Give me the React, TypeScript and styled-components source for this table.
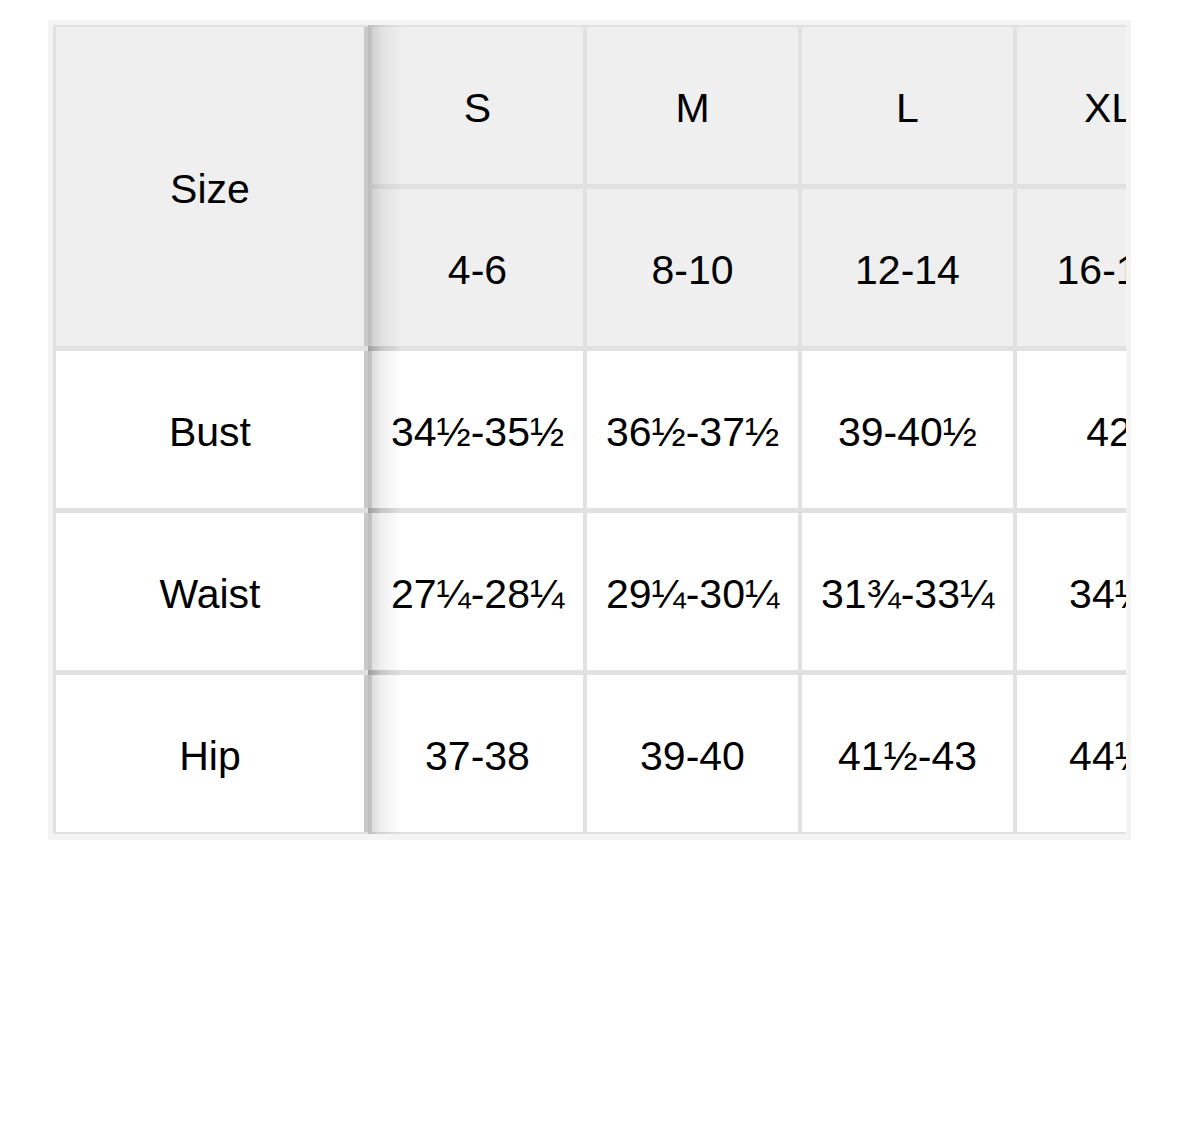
import React from "react";
import styled, { createGlobalStyle } from "styled-components";

const Global = createGlobalStyle`
  html, body { margin: 0; padding: 0; background: #ffffff; }
  body { font-family: "Liberation Sans", Arial, Helvetica, sans-serif; }
`;

const Frame = styled.div`
  margin: 20px 0 0 48px;
  width: 1083px;
  box-sizing: border-box;
  padding: 5px 5px 6px 5px;
  background: #f4f4f4;
`;

const Viewport = styled.div`
  width: 1073px;
  height: 809px;
  overflow: hidden;
  background: #e1e1e1;
`;

const Grid = styled.div`
  display: grid;
  grid-template-columns: 312px repeat(3, 211px) 184px;
  grid-template-rows: repeat(5, 157px);
  column-gap: 4px;
  row-gap: 5px;
  padding: 2px 0 2px 3px;
  width: max-content;
`;

const Cell = styled.div<{ $head?: boolean; $span?: number }>`
  display: flex;
  align-items: center;
  justify-content: center;
  box-sizing: border-box;
  padding-top: 5px;
  background: ${(p) => (p.$head ? "#efefef" : "#ffffff")};
  color: #000;
  font-size: 41px;
  line-height: 1;
  white-space: nowrap;
  ${(p) => (p.$span ? `grid-row: span ${p.$span};` : "")}
`;

const Sticky = styled(Cell)`
  position: relative;
  z-index: 1;
  border-right: 4px solid #c9c9c9;
  &::after {
    content: "";
    position: absolute;
    top: -5px;
    bottom: -5px;
    right: -38px;
    width: 34px;
    background: linear-gradient(
      to right,
      rgba(0, 0, 0, 0.16),
      rgba(0, 0, 0, 0.06) 40%,
      rgba(0, 0, 0, 0)
    );
    pointer-events: none;
  }
`;

const sizes = ["S", "M", "L", "XL"];
const numeric = ["4-6", "8-10", "12-14", "16-18"];
const rows: { label: string; values: string[] }[] = [
  { label: "Bust", values: ["34½-35½", "36½-37½", "39-40½", "42"] },
  { label: "Waist", values: ["27¼-28¼", "29¼-30¼", "31¾-33¼", "34½"] },
  { label: "Hip", values: ["37-38", "39-40", "41½-43", "44½"] },
];

export default function App() {
  return (
    <>
      <Global />
      <Frame>
        <Viewport>
          <Grid>
            <Sticky $head $span={2}>Size</Sticky>
            {sizes.map((s) => (
              <Cell $head key={s}>{s}</Cell>
            ))}
            {numeric.map((s) => (
              <Cell $head key={s}>{s}</Cell>
            ))}
            {rows.map((r) => (
              <React.Fragment key={r.label}>
                <Sticky>{r.label}</Sticky>
                {r.values.map((v, i) => (
                  <Cell key={i}>{v}</Cell>
                ))}
              </React.Fragment>
            ))}
          </Grid>
        </Viewport>
      </Frame>
    </>
  );
}
